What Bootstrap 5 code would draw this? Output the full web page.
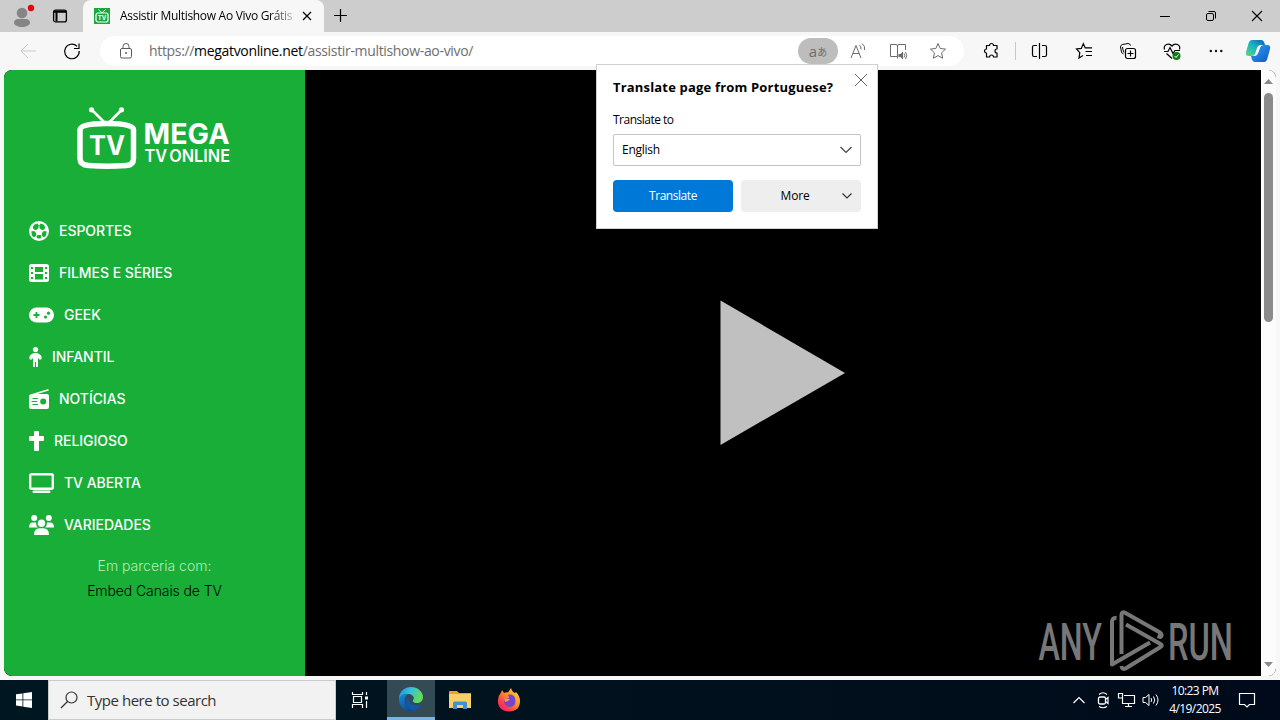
<!DOCTYPE html>
<html lang="en">
<head>
  <meta charset="UTF-8">
  <title>Assistir Multishow Ao Vivo Grátis</title>
  <meta name="viewport" content="width=device-width, initial-scale=1">
  <link href="https://cdn.jsdelivr.net/npm/bootstrap@5.3.0/dist/css/bootstrap.min.css" rel="stylesheet">
  <style>
    body {
      width: 1280px; height: 720px; background: #f7f7f7; color: #000;
      font-family: "Open Sans", "Noto Sans", sans-serif; font-size: 12px; line-height: 16px;
    }
    svg { display: block; flex: none; overflow: visible; }
    .ln { fill: none; stroke: currentColor; }
    .text-fit { white-space: nowrap; }

    /* Tab strip */
    .tab-strip { height: 32px; background: #cdcdcd; }
    .strip-left { width: 83px; padding-left: 8px; }
    .page-tab { width: 241px; background: #f7f7f7; border-radius: 8px 8px 0 0; padding: 0 8px 0 11px; }
    .tab-title {
      width: 174px; margin-left: 10px; overflow: hidden; letter-spacing: -.3px;
      -webkit-mask-image: linear-gradient(90deg, #000 150px, transparent 180px);
      mask-image: linear-gradient(90deg, #000 150px, transparent 180px);
    }
    .win-btn { width: 46px; }

    /* Toolbar */
    .tool-bar { height: 38px; }
    .nav-cell { width: 44px; }
    .tools { margin-left: 5px; }
    .tool-sep { margin: 0 1px 0 2px; }
    .address { width: 864px; height: 30px; background: #fff; border-radius: 15px; padding: 0 6px 0 16px; }
    .url { margin-left: 13px; font-size: 14px; color: #6e6e6e; letter-spacing: -.33px; }
    .url b { font-weight: 400; color: #000; }
    .addr-cell { width: 40px; height: 26px; color: #6a6a6a; }
    .addr-cell.on { background: #bdbdbd; border-radius: 13px; font-size: 15px; color: #6c6c6c; }
    .addr-cell.on span { font: 10px "Noto Sans CJK JP", sans-serif; }

    /* Page */
    .page { height: 606px; margin: 0 4px; border-radius: 8px; overflow: hidden; background: #000; }
    .side { width: 301px; background: #18ae38; color: #fff; font-family: Inter, Roboto, sans-serif; font-size: 14px; }
    .logo { margin: 34px 0 0 68px; }
    .menu { margin: 38px 0 0 25px; }
    .menu a { height: 42px; gap: 10px; font-weight: 500; letter-spacing: -.05px; }
    .partner { line-height: 25px; margin-top: 7px; font-weight: 300; }
    .partner .lbl { color: #b4efb8; }
    .partner .lnk { color: #000; letter-spacing: -.1px; }
    .scroller { width: 15px; background: #fcfcfc; color: #8a8a8a; }
    .thumb { width: 9px; height: 229px; border-radius: 5px; background: #8b8b8b; margin-top: 9px; }

    /* Watermark over the player */
    .any-mark { left: 1034px; top: 596px; }

    /* Translate prompt, floats over toolbar and page */
    .prompt {
      position: absolute; left: 596px; top: 64px; width: 282px; height: 165px;
      background: #fff; border: 1px solid #d0d0d0; padding: 13px 16px;
    }
    .prompt h6 { font-size: 13px; line-height: 18px; font-weight: 700; letter-spacing: .18px; }
    .prompt .close-x { margin: -5px -7px 0 0; }
    .prompt .to-label { letter-spacing: -.5px; }
    .prompt .box { height: 32px; margin-top: 6px; border: 1px solid #c4c4c4; border-radius: 2px; padding: 0 7px 0 8px; letter-spacing: -.25px; }
    .prompt-actions { margin-top: 14px; }
    .prompt .btn { width: 120px; height: 32px; font-size: 12px; border: 0; border-radius: 4px; padding: 0; letter-spacing: -.45px; }
    .prompt .btn-go { background: #0078d7; color: #fff; }
    .prompt .btn-more { background: #eee; color: #000; letter-spacing: -.2px; }

    /* Taskbar */
    .task-bar { height: 40px; background: linear-gradient(90deg, #001721, #00101c 60%, #000a1a); color: #fff; margin-top: 4px; }
    .find { width: 288px; background: #f2f2f2; border: 1px solid #c8cccc; color: #333; font-size: 15px; letter-spacing: -.47px; }
    .app { width: 48px; margin-right: 1px; }
    .app-first { margin-right: 0; }
    .app.on { background: #344a54; border-bottom: 3px solid #76b5ea; margin-left: 2px; }
    .tray { width: 24px; }
    .clock { width: 64px; line-height: 18px; margin-right: 3px; letter-spacing: -.58px; }
    .notify { width: 50px; }
  </style>
</head>
<body class="overflow-hidden position-relative">
  <!-- Tab strip -->
  <div class="tab-strip d-flex">
    <div class="strip-left d-flex align-items-center">
      <svg width="28" height="28" viewBox="8 2 28 28"><circle cx="22" cy="13" r="5.3" fill="#858585"/><path d="M14 23c0-3 2-4 4-4h8c2 0 4 1 4 4 0 2-4 4-8 4s-8-2-8-4z" fill="#858585"/><circle cx="31" cy="8" r="3.2" fill="#e3000f"/></svg>
      <svg class="ms-3" width="16" height="16" viewBox="0 0 16 16"><rect x="1.6" y="2.1" width="12.8" height="11.8" rx="2" class="ln" stroke-width="1.3"/><path d="M2 3.700h12M4.500 4v9.500" class="ln" stroke-width="2"/></svg>
    </div>
    <div class="page-tab d-flex align-items-center">
      <svg width="16" height="16" viewBox="0 0 16 16"><path fill="#18a83b" d="M0 0h16v16H0z"/><rect x="2" y="5" width="12" height="9" rx="2" fill="none" stroke="#fff" stroke-width="1.200"/><path d="M4.500 1.500 8 5l3.500-3.500" fill="none" stroke="#fff"/><text x="8" y="11.800" text-anchor="middle" font-family="Inter" font-weight="700" font-size="6" fill="#fff">TV</text></svg>
      <div class="tab-title text-fit">Assistir Multishow Ao Vivo Grátis</div>
      <svg class="ms-auto" width="18" height="18" viewBox="0 0 18 18"><path d="m5 5 8 8m0-8-8 8" class="ln" stroke-width="1.200"/></svg>
    </div>
    <svg class="align-self-center ms-2" width="18" height="18" viewBox="0 0 18 18"><path d="M8.500 2v13M2 8.500h13" class="ln" stroke-width="1.200"/></svg>
    <div class="d-flex ms-auto align-items-center">
      <div class="win-btn d-flex justify-content-center"><svg width="12" height="12" viewBox="0 0 12 12"><path d="M1 6.500h10" class="ln"/></svg></div>
      <div class="win-btn d-flex justify-content-center"><svg width="12" height="12" viewBox="0 0 12 12"><rect x="1.500" y="3.500" width="7" height="7" rx="1.500" class="ln"/><path d="M3.500 1.500H9q1.500 0 1.500 1.500v5.500" class="ln"/></svg></div>
      <div class="win-btn d-flex justify-content-center"><svg width="12" height="12" viewBox="0 0 12 12"><path d="m1 1 10 10m0-10L1 11" class="ln" stroke-width="1.100"/></svg></div>
    </div>
  </div>

  <!-- Toolbar -->
  <div class="tool-bar d-flex align-items-center">
    <div class="d-flex ps-1 ms-1 flex-shrink-0">
      <svg width="44" height="20" viewBox="8 41 44 20" color="#c9c9c9"><path d="M36 51H21m7-7-7 7 7 7" class="ln"/></svg>
      <svg width="48" height="20" viewBox="52 41 48 20"><path d="M77 46.200A7.300 7.300 0 1 0 79.200 51M79 43.500v5h-5" class="ln" stroke-width="1.200"/></svg>
    </div>
    <div class="address d-flex align-items-center flex-shrink-0">
      <svg width="20" height="20" viewBox="0 0 20 20" color="#5c5c5c"><rect x="4.500" y="7.500" width="11" height="9.500" rx="1.500" class="ln"/><path d="M7 7.500V5.500a3 3 0 0 1 6 0v2" class="ln"/><circle cx="10" cy="12" r="1" fill="currentColor"/></svg>
      <div class="url text-fit">https://<b>megatvonline.net</b>/assistir-multishow-ao-vivo/</div>
      <div class="d-flex ms-auto">
        <div class="addr-cell on d-flex align-items-center justify-content-center">a<span>あ</span></div>
        <div class="addr-cell d-flex align-items-center justify-content-center"><svg width="20" height="20" viewBox="0 0 20 20"><path d="m3 17 5-12.500L13 17M5 12.500h6M11.500 4q2 1.500 1.500 4.500M14 2.500q3.500 2.500 2.500 6.500" class="ln"/></svg></div>
        <div class="addr-cell d-flex align-items-center justify-content-center"><svg width="20" height="20" viewBox="0 0 20 20"><path d="M9.500 17.500v-2h-7v-12H8q1.500 0 1.500 1.500v10.500M9.500 5q0-1.500 1.500-1.500h6.500V9" class="ln"/><path d="M10.500 13h2l2.500-2.500v8L12.500 16h-2z" fill="currentColor"/><path d="M16 12.500q1.500 2 0 4m1.500-5.500q2.500 3.500 0 7" class="ln"/></svg></div>
        <div class="addr-cell d-flex align-items-center justify-content-center"><svg width="20" height="20" viewBox="0 0 20 20"><path d="m10 2.500 2.200 5 5.300.6-3.900 3.700 1 5.400-4.600-2.600-4.600 2.600 1-5.400-3.900-3.700 5.300-.6z" class="ln" stroke-linejoin="round"/></svg></div>
      </div>
    </div>
    <div class="tools d-flex align-items-center flex-shrink-0">
      <div class="nav-cell d-flex justify-content-center"><svg width="20" height="20" viewBox="0 0 20 20"><path d="M5.500 4.500h3a2 2 0 0 1 4 0H16V8a2 2 0 0 0 0 4v4h-3.500a2 2 0 0 0-4 0h-3v-4a2 2 0 0 1 0-4z" class="ln" stroke-width="1.200" stroke-linejoin="round"/></svg></div>
      <svg class="tool-sep" width="2" height="18" viewBox="0 0 2 18" color="#c8c8c8"><path d="M.5 0v18" class="ln"/></svg>
      <div class="nav-cell d-flex justify-content-center"><svg width="20" height="20" viewBox="0 0 20 20"><path d="M7 4.500H4Q2.500 4.500 2.500 6v8q0 1.500 1.500 1.500h3M9.500 2v16M12 4.500h3q1.500 0 1.500 1.500v8q0 1.500-1.500 1.500h-3" class="ln" stroke-width="1.200"/></svg></div>
      <div class="nav-cell d-flex justify-content-center"><svg width="20" height="20" viewBox="0 0 20 20"><path d="M9 14.500 5 17l.8-5.400L2.500 8l4.800-.6L9.300 2.800l1.900 4H18M11.500 10.500H18M12 14.500h6" class="ln" stroke-width="1.200"/></svg></div>
      <div class="nav-cell d-flex justify-content-center"><svg width="20" height="20" viewBox="0 0 20 20"><path d="M5.500 13Q4 12.500 3.500 11L2.500 6q0-2 2-2.500l5.500-1q2 0 2.500 2M6 11.500Q4.500 8 4.500 6" class="ln"/><rect x="7.500" y="7.500" width="10" height="10" rx="2" class="ln" stroke-width="1.200"/><path d="M12.500 9.500v6m-3-3h6" class="ln" stroke-width="1.200"/></svg></div>
      <div class="nav-cell d-flex justify-content-center"><svg width="20" height="20" viewBox="0 0 20 20"><path d="M2.500 8.500C1 3.500 7 1.500 10 5c3-3.500 9-1.500 7.500 3.500M2 10.500h4l2-4 3 6 2-3h5M4.500 12.500 10 17.500" class="ln" stroke-width="1.200"/><circle cx="14.500" cy="15" r="4" fill="#107c10"/><path d="m12.500 15 1.500 1.500 2.500-3" fill="none" stroke="#fff"/></svg></div>
      <div class="nav-cell d-flex justify-content-center"><svg width="20" height="20" viewBox="0 0 20 20"><g fill="#111"><circle cx="4.800" cy="10" r="1.200"/><circle cx="10" cy="10" r="1.200"/><circle cx="15.300" cy="10" r="1.200"/></g></svg></div>
      <svg width="40" height="26" viewBox="0 0 40 26">
        <defs>
          <linearGradient id="cop1" x1="0" y1="1" x2="1" y2="0"><stop stop-color="#62d67a"/><stop offset=".5" stop-color="#19b5c3"/><stop offset="1" stop-color="#0b5fb8"/></linearGradient>
          <linearGradient id="cop2" x1="0" y1="0" x2="1" y2="1"><stop stop-color="#28a8ea"/><stop offset="1" stop-color="#1353cf"/></linearGradient>
        </defs>
        <path d="M14 2h9q3 0 4 5h-4q-3 0-4 3l-2 6q-1 2-4 2h-2q-4 0-3-4l2.500-8.500Q11.500 2 14 2z" fill="url(#cop1)"/>
        <path d="M26 24h-9q-3 0-4-6h3q3 0 4-3l2-5q1-3 4-3h3q4 0 3 4l-2.500 9Q28.500 24 26 24z" fill="url(#cop2)"/>
        <path d="M19.500 10.500q1-2.500 3-2.800l-2.500 7.300q-1 2.500-3 2.800z" fill="#f7f7f7"/>
      </svg>
    </div>
  </div>

  <!-- Page -->
  <main class="page d-flex">
    <aside class="side">
      <svg class="logo" width="164" height="68" viewBox="72 104 164 68" fill="#fff">
        <path d="M106.500 123.500q27 0 27 6v29q0 6.500-7 7-19 1.500-38 0-8.500-.5-8.500-7v-28.500q0-6.500 26.500-6.500z" fill="none" stroke="#fff" stroke-width="5.500"/>
        <path d="m92 110 13 13m16.500-13-13 13" stroke="#fff" stroke-width="2.600"/><circle cx="91.500" cy="109.800" r="2.600"/><circle cx="121.500" cy="109.800" r="2.600"/>
        <g font-family="Inter, sans-serif" font-weight="700">
          <text x="89" y="155" font-size="26.500" textLength="36" lengthAdjust="spacingAndGlyphs">TV</text>
          <text x="143.500" y="143.500" font-size="28.500" textLength="86" lengthAdjust="spacingAndGlyphs">MEGA</text>
          <text x="144.500" y="162" font-size="17.500" font-weight="600" textLength="85.500" lengthAdjust="spacingAndGlyphs" word-spacing="-2">TV ONLINE</text>
        </g>
      </svg>
      <nav class="menu d-flex flex-column">
        <a class="d-flex align-items-center text-reset text-decoration-none">
          <svg width="20" height="20" viewBox="0 0 20 20"><circle cx="10" cy="10" r="10" fill="#fff"/><g fill="#18ae38"><path d="m10 4.600 1.700-2.100 2.800.9 1.700 2.300-.7 2.600-2.300.9-2.700-2V5.500L10 4.600 9.500 5.500v1.700l-2.700 2-2.300-.9-.7-2.600 1.700-2.300 2.800-.9z"/><path d="m2.300 10.600 2.200-.7 1.900.9 1 3-1.100 1.900-2.300.2Q2.400 14 2.300 10.600zM17.700 10.600l-2.200-.7-1.900.9-1 3 1.100 1.900 2.300.2q1.600-1.900 1.700-5.300zM8.100 17.300l-.6-1.700 1-1.600h3l1 1.600-.6 1.700q-1.900.5-3.800 0z"/></g></svg>
          <span>ESPORTES</span>
        </a>
        <a class="d-flex align-items-center text-reset text-decoration-none">
          <svg width="20" height="20" viewBox="0 0 20 20"><rect y="1" width="20" height="18" rx="2.500" fill="#fff"/><g fill="#18ae38"><path d="M6 4h8v5H6zM6 11h8v5.500H6z"/><path d="M2 4h2v2H2zM2 9h2v2H2zM2 14h2v2H2zM16 4h2v2h-2zM16 9h2v2h-2zM16 14h2v2h-2z"/></g></svg>
          <span>FILMES E SÉRIES</span>
        </a>
        <a class="d-flex align-items-center text-reset text-decoration-none">
          <svg width="25" height="20" viewBox="0 0 25 20"><rect y="2.500" width="25" height="15" rx="7.500" fill="#fff"/><path d="M7.500 7v6m-3-3h6" stroke="#18ae38" stroke-width="1.800"/><circle cx="16.500" cy="12" r="1.600" fill="#18ae38"/><circle cx="19.500" cy="8.200" r="1.600" fill="#18ae38"/></svg>
          <span>GEEK</span>
        </a>
        <a class="d-flex align-items-center text-reset text-decoration-none">
          <svg width="13" height="20" viewBox="0 0 13 20"><circle cx="6.500" cy="2.600" r="2.600" fill="#fff"/><path d="M1.200 8.200 4.500 6h4l3.300 2.200q1.500 1.500.5 4.300H10L9 10.500V20H7v-5H6v5H4v-9.500l-1 2H.7q-1-2.800.5-4.300z" fill="#fff"/></svg>
          <span>INFANTIL</span>
        </a>
        <a class="d-flex align-items-center text-reset text-decoration-none">
          <svg width="20" height="20" viewBox="0 0 20 20"><path d="M19.300 0l.5 1.500L8.500 5H18q2 0 2 2v11q0 2-2 2H2q-2 0-2-2V7.500Q0 6 1.200 5.500z" fill="#fff"/><circle cx="14.200" cy="12.500" r="3" fill="#18ae38"/><path d="M3.500 9.500H9M2.500 12.500H8M3.500 15.500H9" stroke="#18ae38" stroke-width="1.100"/></svg>
          <span>NOTÍCIAS</span>
        </a>
        <a class="d-flex align-items-center text-reset text-decoration-none">
          <svg width="15" height="20" viewBox="0 0 384 512"><path fill="#fff" d="M352 128h-96V32c0-17.670-14.330-32-32-32h-64c-17.670 0-32 14.330-32 32v96H32c-17.670 0-32 14.330-32 32v64c0 17.670 14.330 32 32 32h96v224c0 17.670 14.330 32 32 32h64c17.670 0 32-14.330 32-32V256h96c17.670 0 32-14.330 32-32v-64c0-17.670-14.330-32-32-32z"/></svg>
          <span>RELIGIOSO</span>
        </a>
        <a class="d-flex align-items-center text-reset text-decoration-none">
          <svg width="25" height="20" viewBox="0 0 25 20"><rect x="1.200" y="1.200" width="22.600" height="14.600" rx="1.500" fill="none" stroke="#fff" stroke-width="2.400"/><path d="M4.700 18.800h15.600" stroke="#fff" stroke-width="2.400" stroke-linecap="round"/></svg>
          <span>TV ABERTA</span>
        </a>
        <a class="d-flex align-items-center text-reset text-decoration-none">
          <svg width="25" height="20" viewBox="0 0 25 20"><g fill="#fff"><circle cx="5.200" cy="3" r="3"/><circle cx="19.800" cy="3" r="3"/><circle cx="12.500" cy="8.200" r="3.700"/><path d="M0 12.500q0-5 4-5h3Q7 11 9 12.500zM25 12.500q0-5-4-5h-3q0 3.500-2 5zM5 20q0-6.700 5.500-6.700h4Q20 13.300 20 20z"/></g></svg>
          <span>VARIEDADES</span>
        </a>
      </nav>
      <div class="partner text-center">
        <div class="lbl">Em parceria com:</div>
        <div class="lnk">Embed Canais de TV</div>
      </div>
    </aside>
    <section class="flex-grow-1 d-flex align-items-center justify-content-center">
      <svg width="126" height="146" viewBox="0 0 126 146"><path d="M.5.500v144.500L125 73z" fill="#c0c0c0"/></svg>
    </section>
    <div class="scroller d-flex flex-column align-items-center">
      <svg width="9" height="6" viewBox="0 0 9 6" class="mt-2"><path d="M0 6h9L4.500 1z" fill="currentColor"/></svg>
      <div class="thumb"></div>
      <svg class="mt-auto mb-2" width="9" height="6" viewBox="0 0 9 6"><path d="M0 0h9L4.500 5z" fill="currentColor"/></svg>
    </div>
  </main>

  <!-- Watermark over the player -->
  <svg class="any-mark position-absolute" width="206" height="80" viewBox="1034 596 206 80" fill="#777" font-family="Roboto" font-weight="500" font-size="51">
    <text x="1038.500" y="659.500" textLength="63.500" lengthAdjust="spacingAndGlyphs">ANY</text>
    <text x="1168" y="659.500" textLength="65" lengthAdjust="spacingAndGlyphs">RUN</text>
    <g fill="none" stroke="#777" stroke-width="4" stroke-linejoin="round">
      <path d="M1116.500 618q-4.500-.5-4.500 4v42.500l38-22"/>
      <path d="M1121.500 654v-39q0-4 4-2l34.500 19.500q3 2.500.5 4.500l-3-1"/>
      <path d="m1126 624.500 34.500 19.500q2.500 1.500 0 3l-35 21.500q-3.500 1.500-4-2.500"/>
    </g>
  </svg>

  <!-- Translate prompt -->
  <div class="prompt">
    <div class="d-flex justify-content-between align-items-start">
      <h6 class="m-0 text-fit">Translate page from Portuguese?</h6>
      <svg class="close-x" width="14" height="14" viewBox="2 2 14 14" color="#666"><path d="m3 3 12 12M15 3 3 15" class="ln"/></svg>
    </div>
    <div class="to-label mt-3 text-fit">Translate to</div>
    <div class="box d-flex align-items-center justify-content-between">
      <span>English</span>
      <svg width="14" height="8" viewBox="0 0 14 8" color="#444"><path d="m1.500 1 5.500 5.500L12.500 1" class="ln" stroke-width="1.200"/></svg>
    </div>
    <div class="d-flex gap-2 prompt-actions">
      <button class="btn btn-go">Translate</button>
      <button class="btn btn-more d-flex align-items-center">
        <span class="flex-grow-1 ps-2">More</span>
        <svg class="me-2" width="12" height="8" viewBox="0 0 12 8" color="#333"><path d="m1.500 1.500 4.500 4.500 4.500-4.500" class="ln" stroke-width="1.200"/></svg>
      </button>
    </div>
  </div>

  <!-- Taskbar -->
  <footer class="task-bar d-flex">
    <div class="app app-first d-flex align-items-center justify-content-center">
      <svg width="16" height="16" viewBox="0 0 16 16" fill="#fff"><path d="M0 2.300 6.500 1.400v6.100H0zM7.300 1.300 16 0v7.500H7.300zM0 8.300h6.500v6.200L0 13.600zM7.300 8.300H16V16l-8.700-1.300z"/></svg>
    </div>
    <div class="find d-flex align-items-center ps-2">
      <svg class="ms-1" width="18" height="18" viewBox="0 0 18 18"><circle cx="10.500" cy="6.500" r="5.500" class="ln" stroke-width="1.200"/><path d="M6.500 10.500 0 17" class="ln" stroke-width="1.200"/></svg>
      <span class="text-fit ps-2">Type here to search</span>
    </div>
    <div class="app d-flex align-items-center justify-content-center">
      <svg width="16" height="16" viewBox="0 0 16 16"><path d="M.5 0v2.500h10V0M.5 16v-3.500h10V16M1.500 4.500h8v6h-8zM14.500 0v3m0 6v7" class="ln" stroke-width="1.200"/><path d="M13 4.500h3v3h-3z" fill="#fff"/></svg>
    </div>
    <div class="app on d-flex align-items-center justify-content-center">
      <svg width="24" height="24" viewBox="0 0 24 24">
        <defs><linearGradient id="eg1" x1="0" y1="0" x2="1" y2=".3"><stop stop-color="#1c91d8"/><stop offset=".5" stop-color="#35c0dd"/><stop offset="1" stop-color="#64dc58"/></linearGradient>
        <linearGradient id="eg2" x1="0" y1="0" x2=".6" y2="1"><stop stop-color="#1a8bd6"/><stop offset="1" stop-color="#0b4c9e"/></linearGradient></defs>
        <path d="M0 12C0 4 6 0 12 0c7 0 12 5 12 10 0 4-3 6-6 6-4 0-5-2-3.500-3.500C16 9 12 7 9 7c-5 0-8 3-9 6z" fill="url(#eg1)"/>
        <path d="M0 12c1-4 5-6 9-5-3 2-4 5-3 9 1 3 4 6 8 7.500C6 26 0 19 0 12z" fill="url(#eg2)"/>
        <path d="M9.500 10C5 13 7 22 14 23.500c4-.5 7-3 8.500-6-5 2.500-13 1-13-7.500z" fill="#1057a9"/>
      </svg>
    </div>
    <div class="app d-flex align-items-center justify-content-center">
      <svg width="22" height="20" viewBox="0 0 22 20"><path d="M0 2q0-1 1-1h7l2 2h12v15H0z" fill="#e5a52c"/><path d="M0 4h22v14H0z" fill="#f9d066"/><path d="M4 19v-6q0-1.500 1.500-1.500h11q1.500 0 1.500 1.500v6h-4v-4H8v4z" fill="#3f91cf"/></svg>
    </div>
    <div class="app d-flex align-items-center justify-content-center">
      <svg width="24" height="24" viewBox="0 0 24 24">
        <defs><linearGradient id="ff" x1="1" y1="0" x2=".1" y2="1"><stop stop-color="#ffe14a"/><stop offset=".45" stop-color="#ff9125"/><stop offset=".75" stop-color="#ff3d48"/><stop offset="1" stop-color="#e5178a"/></linearGradient></defs>
        <path d="M4 4.500 5 2l2 3q2-1 4-.500L14 0q1 4 4 5l1-1q4 4 4 9 0 10-11 10.500Q1 23 .8 12.500.8 8 4 4.500z" fill="url(#ff)"/>
        <path d="M7 10q3 1 5 0 0-2-1.500-3Q16 5 18 10q2 9-6 9-6-1-5-9z" fill="#7446cf"/><path d="M7 10q3 1 6 1-2 3-5 3z" fill="#ff9a29"/>
      </svg>
    </div>
    <div class="d-flex align-items-center ms-auto">
      <div class="tray d-flex justify-content-center"><svg width="14" height="8" viewBox="0 0 14 8"><path d="m1.500 7 5.500-5.500L12.500 7" class="ln" stroke-width="1.200"/></svg></div>
      <div class="tray d-flex justify-content-center"><svg width="16" height="18" viewBox="0 0 16 18"><rect x="3.500" y="6" width="7" height="7" rx="1.500" class="ln" stroke-width="1.300"/><path d="m10.500 8.500 2.500-2v6l-2.500-2M4 3.500Q8 0 12 3.500M4 15.500q4 2.500 8 0" class="ln" stroke-width="1.200"/></svg></div>
      <div class="tray d-flex justify-content-center"><svg width="18" height="16" viewBox="0 0 18 16"><path d="M6 3.500h10.500v8H4.500V6M.5 1.500h4V6h-4zM7 14.500h7M10.500 11.500v3" class="ln" stroke-width="1.200"/></svg></div>
      <div class="tray d-flex justify-content-center"><svg width="18" height="16" viewBox="0 0 18 16"><path d="M1 5.500h2.500L7 2.500v11l-3.500-3H1zM9 6q1.500 2 0 4M11.500 4.500q2.500 3.500 0 7M14 2.500q4 5.500 0 11" class="ln"/></svg></div>
      <div class="clock text-center">10:23 PM<br>4/19/2025</div>
      <div class="notify ps-2"><svg width="18" height="18" viewBox="0 0 18 18"><path d="M1.500 2.500h15v11h-5L9 16l-2.500-2.500h-5z" class="ln" stroke-width="1.200"/></svg></div>
    </div>
  </footer>
  <script src="https://cdn.jsdelivr.net/npm/bootstrap@5.3.0/dist/js/bootstrap.bundle.min.js"></script>
</body>
</html>
